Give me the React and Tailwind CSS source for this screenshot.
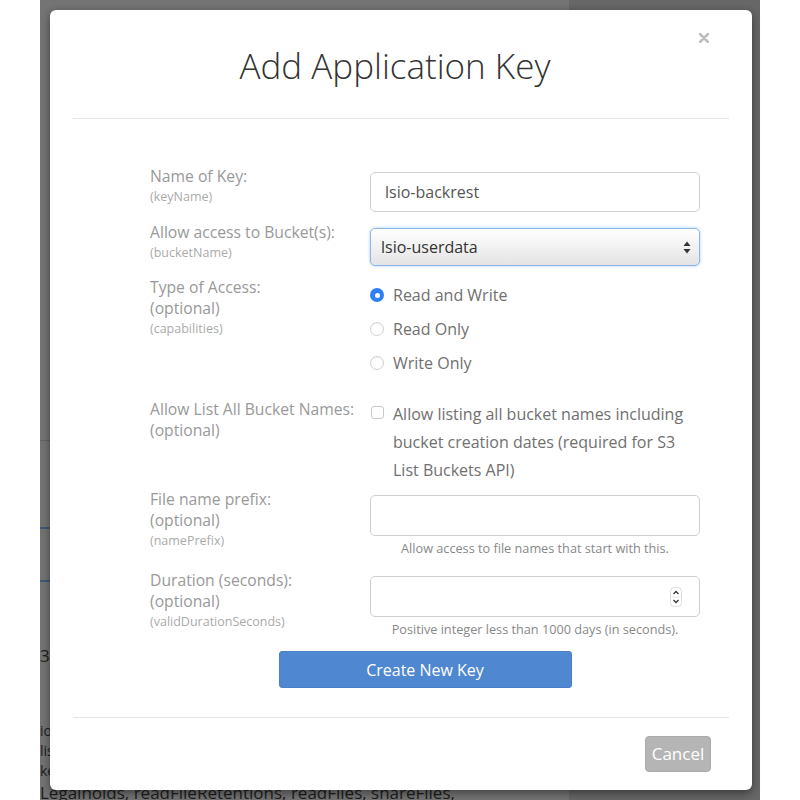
function Labels({ main, sub }) {
  return (
    <div className="flex flex-col">
      {main.map((t) => (
        <span key={t} className="whitespace-nowrap text-[15.7px] leading-[21px] text-[#999]">
          {t}
        </span>
      ))}
      {sub ? <span className="text-[12.5px] leading-[20px] text-[#aaa]">{sub}</span> : null}
    </div>
  );
}

function Radio({ checked, label }) {
  return (
    <div className="flex h-[34px] items-center">
      {checked ? (
        <span className="flex h-[14px] w-[14px] items-center justify-center rounded-full bg-[#2f7ff7]">
          <span className="h-[5px] w-[5px] rounded-full bg-white" />
        </span>
      ) : (
        <span className="h-[14px] w-[14px] rounded-full border border-[#d2d2d2] bg-white shadow-[inset_0_1px_1px_rgba(0,0,0,0.06)]" />
      )}
      <span className="ml-[9px] text-[16px] text-[#707070]">{label}</span>
    </div>
  );
}

export default function App() {
  return (
    <div className="relative flex h-[800px] w-[800px] overflow-hidden bg-white font-['Open_Sans',sans-serif]">
      <div className="w-[40px] shrink-0" />
      <div className="flex w-[720px] shrink-0">
        <div className="flex w-[529px] flex-col overflow-hidden whitespace-nowrap bg-[#747474] text-[#1d1d1d]">
          <div className="h-[440px] shrink-0" />
          <div className="h-px shrink-0 bg-[#626262]" />
          <div className="h-[86px] shrink-0" />
          <div className="h-[2px] shrink-0 bg-[#41597a]" />
          <div className="h-[51px] shrink-0" />
          <div className="h-[2px] shrink-0 bg-[#41597a]" />
          <div className="mt-[62px] text-[17px] leading-[24px]">388</div>
          <div className="mt-[53px] text-[14px] leading-[20px]">ions,</div>
          <div className="text-[14px] leading-[20px]">list,</div>
          <div className="text-[14px] leading-[20px]">keys,</div>
          <div className="text-[17px] leading-[24px]">Legalholds, readFileRetentions, readFiles, shareFiles,</div>
        </div>
        <div className="flex-1 bg-[#676767]" />
      </div>
      <div className="w-[40px] shrink-0" />

      <div className="absolute left-[50px] top-[10px] flex h-[780px] w-[702px] flex-col rounded-[6px] bg-white shadow-[0_3px_10px_rgba(0,0,0,0.45)]">
        <div className="relative mx-[23px] flex h-[109px] shrink-0 items-center justify-center border-b border-[#e5e5e5] pr-[12px] pt-[4px]">
          <h1 className="text-[35px] font-light leading-[44px] text-[#333]">Add Application Key</h1>
          <svg
            className="absolute left-[626px] top-[23px]"
            width="10"
            height="10"
            viewBox="0 0 10 10"
          >
            <path d="M1 1 L9 9 M9 1 L1 9" stroke="#bdbdbd" strokeWidth="2.6" strokeLinecap="round" />
          </svg>
        </div>

        <div className="ml-[100px] flex w-[550px] flex-col">
          <div className="mt-[47px] grid grid-cols-[220px_330px]">
            <Labels main={["Name of Key:"]} sub="(keyName)" />
            <div className="mt-[6px] flex h-[40px] items-center rounded-[5px] border border-[#cfcfcf] pl-[14px] text-[16px] text-[#555]">
              lsio-backrest
            </div>
          </div>

          <div className="mt-[10px] grid grid-cols-[220px_330px]">
            <Labels main={["Allow access to Bucket(s):"]} sub="(bucketName)" />
            <div className="mt-[6px] flex h-[38px] items-center justify-between rounded-[5px] border border-[#8db5e6] bg-linear-to-b from-white to-[#e4e4e4] pl-[10px] pr-[8px] text-[16px] text-[#333] shadow-[0_0_3px_rgba(102,160,230,0.6)]">
              <span>lsio-userdata</span>
              <svg width="8" height="13" viewBox="0 0 8 13">
                <path d="M4 0.5 L7.5 5 H0.5 Z" fill="#333" />
                <path d="M4 12.5 L7.5 8 H0.5 Z" fill="#333" />
              </svg>
            </div>
          </div>

          <div className="mt-[11px] grid grid-cols-[220px_330px]">
            <Labels main={["Type of Access:", "(optional)"]} sub="(capabilities)" />
            <div className="mt-[1px] flex flex-col">
              <Radio checked label="Read and Write" />
              <Radio label="Read Only" />
              <Radio label="Write Only" />
            </div>
          </div>

          <div className="mt-[19px] grid grid-cols-[220px_330px]">
            <Labels main={["Allow List All Bucket Names:", "(optional)"]} />
            <div className="mt-[1px] flex items-start">
              <span className="mt-[6px] ml-[1px] h-[13px] w-[13px] shrink-0 rounded-[3px] border border-[#c8c8c8] bg-white" />
              <span className="ml-[9px] w-[300px] text-[16px] leading-[28px] text-[#707070]">
                Allow listing all bucket names including bucket creation dates (required for S3 List Buckets API)
              </span>
            </div>
          </div>

          <div className="mt-[5px] grid grid-cols-[220px_330px]">
            <Labels main={["File name prefix:", "(optional)"]} sub="(namePrefix)" />
            <div className="flex flex-col">
              <div className="mt-[6px] h-[41px] rounded-[5px] border border-[#cfcfcf]" />
              <span className="mt-[4px] text-center text-[12.7px] leading-[17px] text-[#888]">
                Allow access to file names that start with this.
              </span>
            </div>
          </div>

          <div className="mt-[13px] grid grid-cols-[220px_330px]">
            <Labels main={["Duration (seconds):", "(optional)"]} sub="(validDurationSeconds)" />
            <div className="flex flex-col">
              <div className="mt-[6px] flex h-[41px] items-center justify-end rounded-[5px] border border-[#cfcfcf] pr-[17px]">
                <svg width="12" height="20" viewBox="0 0 12 20">
                  <rect x="0.5" y="0.5" width="11" height="19" rx="4" fill="#fff" stroke="#dcdcdc" />
                  <path d="M0.5 10 H11.5" stroke="#e6e6e6" />
                  <path d="M3.5 7 L6 4.5 L8.5 7" fill="none" stroke="#333" strokeWidth="1.3" />
                  <path d="M3.5 13 L6 15.5 L8.5 13" fill="none" stroke="#333" strokeWidth="1.3" />
                </svg>
              </div>
              <span className="mt-[4px] text-center text-[12.7px] leading-[17px] text-[#888]">
                Positive integer less than 1000 days (in seconds).
              </span>
            </div>
          </div>

          <div className="mt-[13px] flex justify-center">
            <button className="h-[37px] w-[293px] rounded-[3px] border border-[#4a80c6] bg-[#4f88d0] text-[16px] text-white">
              Create New Key
            </button>
          </div>
        </div>

        <div className="mx-[23px] mt-[29px] flex justify-end border-t border-[#e5e5e5] pr-[18px] pt-[18px]">
          <button className="h-[36px] w-[66px] rounded-[4px] border border-[#ababab] bg-[#b5b5b5] text-[17px] text-white">
            Cancel
          </button>
        </div>
      </div>
    </div>
  );
}
